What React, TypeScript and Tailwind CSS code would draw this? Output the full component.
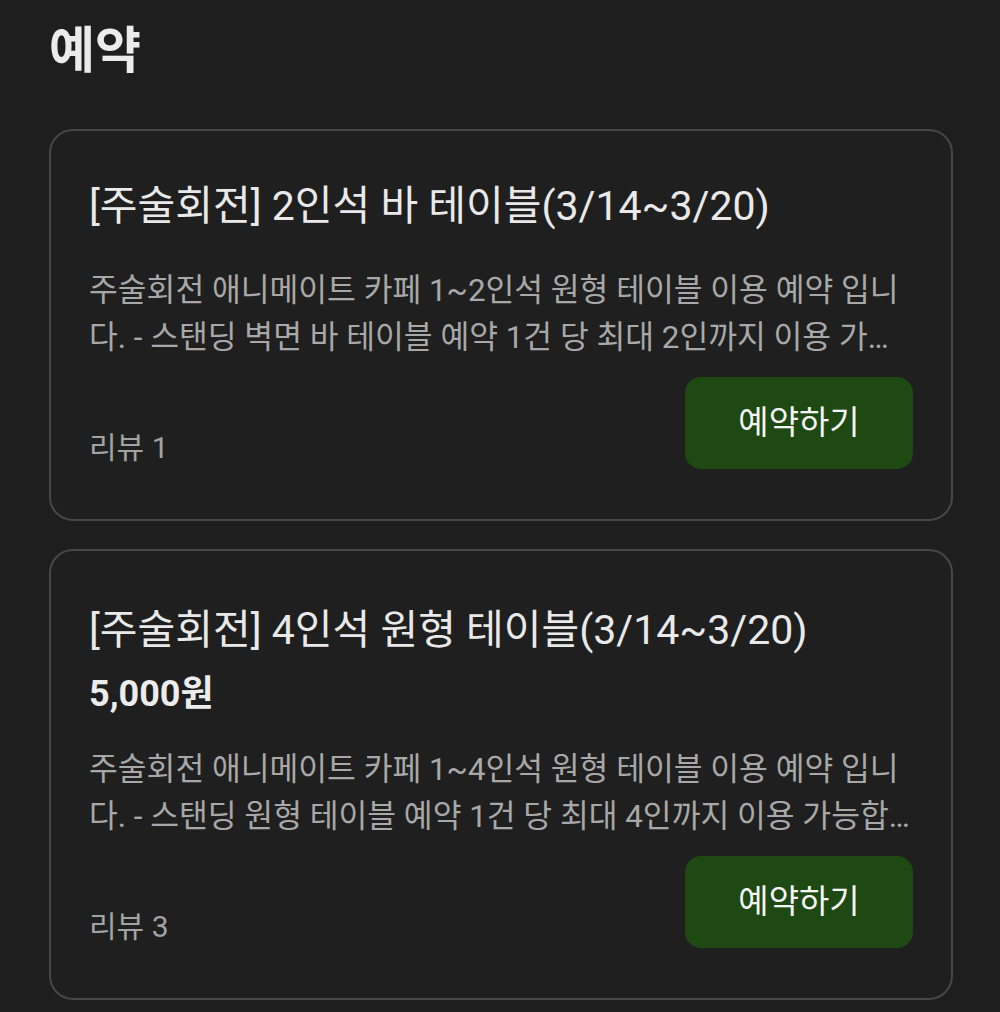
import React from "react";

type Item = {
  title: string;
  price?: string;
  desc: string;
  reviews: number;
};

const items: Item[] = [
  {
    title: "[주술회전] 2인석 바 테이블(3/14~3/20)",
    desc: "주술회전 애니메이트 카페 1~2인석 원형 테이블 이용 예약 입니다. - 스탠딩 벽면 바 테이블 예약 1건 당 최대 2인까지 이용 가능합니다. - 이용 시간은 1시간 입니다.",
    reviews: 1,
  },
  {
    title: "[주술회전] 4인석 원형 테이블(3/14~3/20)",
    price: "5,000원",
    desc: "주술회전 애니메이트 카페 1~4인석 원형 테이블 이용 예약 입니다. - 스탠딩 원형 테이블 예약 1건 당 최대 4인까지 이용 가능합니다. - 이용 시간은 1시간 입니다.",
    reviews: 3,
  },
];

function Card({ item }: { item: Item }) {
  return (
    <div
      className={
        "rounded-[24px] border-2 border-[#474747] bg-[#1f1f1f] px-[38px] pb-[50px] " +
        (item.price ? "pt-[52px]" : "pt-12")
      }
    >
      <div
        className={
          "text-[41px] leading-[54px] text-[#e9e9e9] " +
          (item.price ? "mb-[15px]" : "mb-[35px]")
        }
      >
        {item.title}
      </div>
      {item.price && (
        <div className="mb-[30px] text-[36px] font-bold leading-[45px] text-[#ececec]">
          {item.price}
        </div>
      )}
      <div className="line-clamp-2 text-[31.3px] leading-[46.5px] text-[#a8a8a8]">
        {item.desc}
      </div>
      <div className="mt-[16px] flex items-end justify-between">
        <div className="text-[30px] leading-[42px] text-[#a3a3a3]">리뷰 {item.reviews}</div>
        <button className="flex h-[92px] w-[228px] items-center justify-center rounded-[16px] bg-[#1f4913] text-[33px] text-[#f4f4f4]">
          예약하기
        </button>
      </div>
    </div>
  );
}

export default function App() {
  return (
    <div
      className="min-h-[1012px] bg-[#1e1e1f] pl-[49px] pr-[47px] pt-[21px] pb-8"
      style={{ fontFamily: 'Roboto, "Noto Sans CJK KR", sans-serif' }}
    >
      <h1 className="mb-[48px] text-[50px] font-bold leading-[60px] text-[#ebebeb]">예약</h1>
      <div className="flex flex-col gap-[28px]">
        {items.map((it, i) => (
          <Card key={i} item={it} />
        ))}
      </div>
    </div>
  );
}
